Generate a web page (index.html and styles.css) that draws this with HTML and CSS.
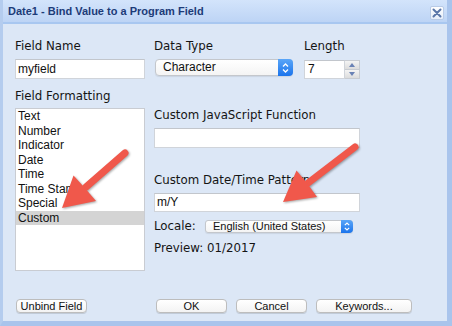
FILE: index.html
```html
<!DOCTYPE html>
<html>
<head>
<meta charset="utf-8">
<link rel="stylesheet" href="styles.css">
</head>
<body>
<div class="dialog">
  <div class="titlebar">
    <span class="title">Date1 - Bind Value to a Program Field</span>
    <span class="close"><svg width="12" height="12" viewBox="0 0 12 12"><path d="M2.5 2.5 L9.5 9.5 M9.5 2.5 L2.5 9.5" stroke="#5a76a8" stroke-width="2" stroke-linecap="round"/></svg></span>
  </div>
  <div class="content">
    <div class="col-left">
      <div class="lbl">Field Name</div>
      <div class="input name-input">myfield</div>
      <div class="lbl lbl-format">Field Formatting</div>
      <div class="list">
        <div class="item">Text</div>
        <div class="item">Number</div>
        <div class="item">Indicator</div>
        <div class="item">Date</div>
        <div class="item">Time</div>
        <div class="item">Time Stamp</div>
        <div class="item">Special</div>
        <div class="item selected">Custom</div>
      </div>
    </div>
    <div class="col-right">
      <div class="row-top">
        <div class="type-field">
          <div class="lbl">Data Type</div>
          <div class="select select-type">Character<span class="stepper"><svg width="9" height="12" viewBox="0 0 9 12"><path d="M2 4.5 L4.5 2 L7 4.5 M2 7.5 L4.5 10 L7 7.5" fill="none" stroke="#fff" stroke-width="1.3"/></svg></span></div>
        </div>
        <div class="length-field">
          <div class="lbl">Length</div>
          <div class="spin">
            <div class="input len-input">7</div>
            <div class="spin-btns">
              <div class="spin-btn"><svg width="6" height="4" viewBox="0 0 6 4"><path d="M0 4 L3 0 L6 4 Z" fill="#6a82b5"/></svg></div>
              <div class="spin-btn"><svg width="6" height="4" viewBox="0 0 6 4"><path d="M0 0 L3 4 L6 0 Z" fill="#6a82b5"/></svg></div>
            </div>
          </div>
        </div>
      </div>
      <div class="lbl lbl-js">Custom JavaScript Function</div>
      <div class="input wide-input"></div>
      <div class="lbl lbl-pattern">Custom Date/Time Pattern</div>
      <div class="input wide-input pattern-input">m/Y</div>
      <div class="locale-row">
        <div class="lbl locale-lbl">Locale:</div>
        <div class="select select-locale">English (United States)<span class="stepper stepper-small"><svg width="8" height="11" viewBox="0 0 8 11"><path d="M1.8 4.2 L4 2 L6.2 4.2 M1.8 6.8 L4 9 L6.2 6.8" fill="none" stroke="#fff" stroke-width="1.2"/></svg></span></div>
      </div>
      <div class="lbl preview">Preview: 01/2017</div>
    </div>
  </div>
  <div class="footer">
    <div class="btn btn-unbind">Unbind Field</div>
    <div class="btn btn-ok">OK</div>
    <div class="btn">Cancel</div>
    <div class="btn btn-keywords">Keywords...</div>
  </div>
  <svg class="arrows" width="452" height="326" viewBox="0 0 452 326">
    <g class="arrow">
      <line x1="125" y1="153" x2="86" y2="187" stroke="#f0584b" stroke-width="7" stroke-linecap="round"/>
      <path d="M62 208 L73.5 175.5 L84 187 L96 201 Z" fill="#f0584b"/>
    </g>
    <g class="arrow">
      <line x1="355" y1="147" x2="308" y2="183" stroke="#f0584b" stroke-width="7" stroke-linecap="round"/>
      <path d="M283 202 L296.5 170.5 L307 183 L317 197 Z" fill="#f0584b"/>
    </g>
  </svg>
</div>
</body>
</html>
```

FILE: styles.css
```css
* { box-sizing: border-box; }
html, body { margin: 0; padding: 0; }
body { background: #dce7f6; }

.dialog {
  position: relative;
  width: 452px;
  height: 326px;
  background: #dce7f6;
  border-left: 3px solid #b4ccee;
  border-right: 5px solid #a9c4ec;
  border-bottom: 5px solid #a9c4ec;
  display: flex;
  flex-direction: column;
  font-family: "DejaVu Sans", Verdana, sans-serif;
  color: #141414;
}

.titlebar {
  height: 24px;
  background: linear-gradient(#d3e4fb, #bdd4f5);
  border-bottom: 2px solid #a8c7f0;
  display: flex;
  align-items: flex-start;
  justify-content: space-between;
  padding-left: 5px;
  padding-right: 3px;
}
.title {
  font-family: "Liberation Sans", Arial, sans-serif;
  font-weight: bold;
  font-size: 11px;
  line-height: 22px;
  color: #1c3b78;
}
.close {
  margin-top: 6px;
  width: 14px;
  height: 14px;
  background: linear-gradient(#ffffff, #e6eefa);
  border: 1px solid #b9cbe6;
  border-radius: 2px;
  display: flex;
  align-items: center;
  justify-content: center;
}

.content {
  display: flex;
  padding: 15px 0 0 12px;
  gap: 9px;
}

.lbl {
  font-size: 11.8px;
  line-height: 14px;
  white-space: nowrap;
}

.input {
  background: #fff;
  border: 1px solid #d0d4da;
  border-top-color: #c2c6cc;
  font-family: "Liberation Sans", Arial, sans-serif;
  font-size: 12px;
  color: #111;
  padding-left: 2px;
}

.col-left {
  width: 130px;
  display: flex;
  flex-direction: column;
}
.name-input {
  margin-top: 6px;
  height: 20px;
  line-height: 18px;
}
.lbl-format { margin-top: 10px; }

.list {
  margin-top: 5px;
  height: 163px;
  background: #fff;
  border: 1px solid #c9ccd2;
  font-family: "Liberation Sans", Arial, sans-serif;
  font-size: 12px;
  color: #111;
}
.item {
  line-height: 14.5px;
  padding-left: 2px;
  white-space: nowrap;
  overflow: hidden;
}
.item.selected { background: #d4d4d4; }

.col-right {
  width: 206px;
  display: flex;
  flex-direction: column;
}
.row-top { display: flex; }
.type-field { width: 150px; }
.length-field { width: 56px; }

.select {
  position: relative;
  background: linear-gradient(#ffffff, #f4f4f4);
  border: 1px solid #c4c7cc;
  border-radius: 4px;
  font-family: "Liberation Sans", Arial, sans-serif;
  color: #111;
  box-shadow: 0 1px 1px rgba(0,0,0,0.08);
}
.select-type {
  margin-top: 6px;
  margin-left: 1px;
  width: 138px;
  height: 17px;
  font-size: 12px;
  line-height: 15px;
  padding-left: 7px;
}
.stepper {
  position: absolute;
  right: -1px;
  top: -1px;
  bottom: -1px;
  width: 15px;
  background: linear-gradient(#5aa6f8, #1b74ec);
  border-radius: 0 4px 4px 0;
  display: flex;
  align-items: center;
  justify-content: center;
}
.stepper-small { width: 12px; }

.spin {
  margin-top: 7px;
  display: flex;
  height: 19px;
}
.len-input {
  width: 41px;
  height: 19px;
  line-height: 17px;
  padding-left: 3px;
}
.spin-btns {
  width: 15px;
  display: flex;
  flex-direction: column;
  border: 1px solid #c8ccd2;
  border-left: none;
}
.spin-btn {
  flex: 1;
  background: linear-gradient(#f4f4f4, #dcdcdc);
  display: flex;
  align-items: center;
  justify-content: center;
}
.spin-btn + .spin-btn { border-top: 1px solid #c8ccd2; }

.lbl-js { margin-top: 29px; }
.wide-input {
  margin-top: 6px;
  width: 206px;
  height: 20px;
  line-height: 18px;
}
.lbl-pattern { margin-top: 25px; }
.pattern-input { height: 19px; line-height: 17px; }

.locale-row {
  margin-top: 7px;
  display: flex;
  align-items: center;
  height: 14px;
}
.locale-lbl { width: 51px; }
.select-locale {
  width: 148px;
  height: 13px;
  font-size: 11px;
  line-height: 11px;
  padding-left: 7px;
  border-radius: 3px;
}
.preview { margin-top: 8px; }

.footer {
  display: flex;
  gap: 9px;
  margin-top: auto;
  padding: 0 0 8px 13px;
}
.btn {
  width: 71px;
  height: 14px;
  background: linear-gradient(#ffffff, #f3f3f3);
  border: 1px solid #bdbdbd;
  border-radius: 4px;
  box-shadow: 0 1px 0 rgba(0,0,0,0.12);
  font-family: "Liberation Sans", Arial, sans-serif;
  font-size: 11px;
  line-height: 12px;
  text-align: center;
  color: #111;
}
.btn-unbind { margin-right: 60px; }
.btn-keywords { width: 96px; }

.arrows {
  position: absolute;
  left: -3px;
  top: 0;
  pointer-events: none;
}
.arrow { filter: drop-shadow(1px 1px 1px rgba(0,0,0,0.35)); }
```
